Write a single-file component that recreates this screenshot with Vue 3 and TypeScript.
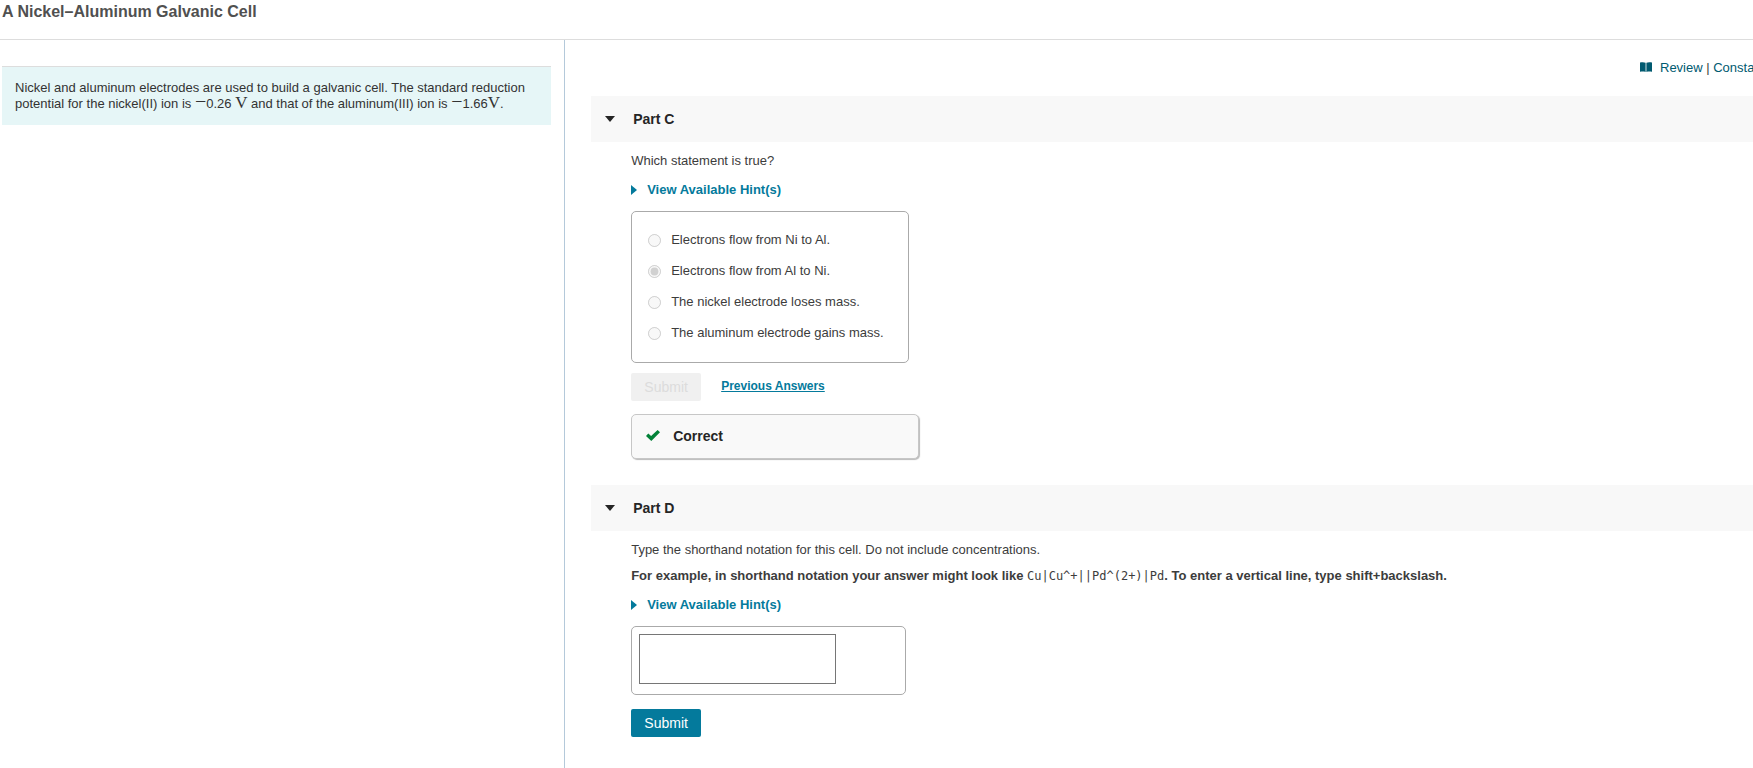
<script setup lang="ts">
import { ref } from 'vue'

const statements: string[] = [
  'Electrons flow from Ni to Al.',
  'Electrons flow from Al to Ni.',
  'The nickel electrode loses mass.',
  'The aluminum electrode gains mass.',
]
const chosen = ref<number>(1)
const notation = ref<string>('')
const openC = ref<boolean>(true)
const openD = ref<boolean>(true)
</script>

<template>
  <div class="page">
    <header class="title-bar">
      <h1>A Nickel–Aluminum Galvanic Cell</h1>
    </header>
    <div class="columns">
      <aside class="intro">
        <p class="problem">
          Nickel and aluminum electrodes are used to build a galvanic cell. The standard reduction potential for the
          nickel(II) ion is <span class="minus">−</span>0.26 <span class="unit">V</span> and that of the aluminum(III)
          ion is <span class="minus">−</span>1.66<span class="unit">V</span>.
        </p>
      </aside>
      <main class="work">
        <nav class="tools">
          <div class="tool-links">
            <svg class="book" viewBox="0 0 12 10" aria-hidden="true">
              <path d="M0 0.5C2 0 4 0 5.6 0.7V10C4 9.4 2 9.4 0 9.8ZM6.4 0.7C8 0 10 0 12 0.5V9.8C10 9.4 8 9.4 6.4 10Z" fill="#005a70" />
            </svg>
            <a href="#review">Review</a> | <a href="#constants">Constants</a>
          </div>
        </nav>

        <section class="part">
          <h2>
            <button type="button" class="part-head" :aria-expanded="openC" @click="openC = !openC">
              <svg class="down" viewBox="0 0 10 6" aria-hidden="true"><path d="M0 0H10L5 6Z" fill="#252525" /></svg>
              Part C
            </button>
          </h2>
          <div v-if="openC" class="part-body">
            <p id="question-c">Which statement is true?</p>
            <button type="button" class="hint">
              <svg class="right" viewBox="0 0 6 10" aria-hidden="true"><path d="M0 0L6 5L0 10Z" fill="#047a9c" /></svg>
              View Available Hint(s)
            </button>
            <div class="choices" role="radiogroup" aria-labelledby="question-c">
              <label v-for="(text, i) in statements" :key="i">
                <input v-model="chosen" type="radio" name="statement" :value="i" disabled />
                <span>{{ text }}</span>
              </label>
            </div>
            <div class="actions">
              <button type="button" class="submit" disabled>Submit</button>
              <a class="previous" href="#previous">Previous Answers</a>
            </div>
            <div class="feedback" role="status">
              <svg class="check" viewBox="0 0 14 11" aria-hidden="true">
                <path d="M0 5.9L2.3 3.5L5.1 6.1L11.6 0L14 2.3L5.3 11Z" fill="#038238" />
              </svg>
              Correct
            </div>
          </div>
        </section>

        <section class="part">
          <h2>
            <button type="button" class="part-head" :aria-expanded="openD" @click="openD = !openD">
              <svg class="down" viewBox="0 0 10 6" aria-hidden="true"><path d="M0 0H10L5 6Z" fill="#252525" /></svg>
              Part D
            </button>
          </h2>
          <div v-if="openD" class="part-body">
            <p id="question-d">Type the shorthand notation for this cell. Do not include concentrations.</p>
            <p class="example">
              For example, in shorthand notation your answer might look like <code>Cu|Cu^+||Pd^(2+)|Pd</code>. To enter
              a vertical line, type shift+backslash.
            </p>
            <button type="button" class="hint">
              <svg class="right" viewBox="0 0 6 10" aria-hidden="true"><path d="M0 0L6 5L0 10Z" fill="#047a9c" /></svg>
              View Available Hint(s)
            </button>
            <div class="answer">
              <input v-model="notation" type="text" aria-labelledby="question-d" />
            </div>
            <button type="button" class="submit">Submit</button>
          </div>
        </section>
      </main>
    </div>
  </div>
</template>

<style>
body {
  margin: 0;
  background: #fff;
}
</style>

<style scoped>
* {
  box-sizing: border-box;
}
.page {
  display: flex;
  flex-direction: column;
  min-height: 100vh;
  overflow: hidden;
  font: 13px/16px "Liberation Sans", Arial, sans-serif;
  color: #3c3c3c;
}
h1,
h2,
p {
  margin: 0;
}
button {
  font: inherit;
  border: 0;
  cursor: pointer;
}
a {
  color: #005a70;
  text-decoration: none;
}
svg {
  flex: none;
  display: block;
}
.title-bar {
  padding: 2px 2px 17px;
  border-bottom: 1px solid #ddd;
}
h1 {
  font-size: 16px;
  line-height: 20px;
  color: #505050;
}
.columns {
  display: flex;
  flex: 1;
}
.intro {
  flex: 0 0 32.24%;
  padding: 26px 13px 0 2px;
  border-right: 1px solid #b4c9da;
}
.problem {
  padding: 13px;
  border-top: 1px solid #ddd;
  background: #e6f6f7;
  color: #333;
}
.minus,
.unit {
  font-family: "Liberation Serif", "Times New Roman", serif;
  line-height: 8px;
}
.minus {
  font-size: 20px;
}
.unit {
  font-size: 17px;
}
.work {
  flex: 1;
  min-width: 0;
  padding: 20px 0 31px 26px;
}
.tools {
  display: flex;
  justify-content: flex-end;
  padding-bottom: 20px;
}
.tool-links {
  width: 113px;
  overflow: hidden;
  white-space: nowrap;
}
.book {
  display: inline-block;
  width: 12px;
  height: 10px;
  margin-right: 4px;
}
.tool-links a:first-of-type {
  margin-left: 4px;
}
.part + .part {
  margin-top: 26px;
}
.part-head {
  display: flex;
  align-items: center;
  gap: 18px;
  width: 100%;
  height: 46px;
  padding: 0 14px;
  background: #f8f8f8;
  color: #252525;
  font-size: 14px;
  font-weight: bold;
}
.down {
  width: 10px;
  height: 6px;
}
.part-body {
  padding: 11px 40px 0;
}
.hint {
  display: flex;
  align-items: center;
  gap: 10px;
  margin: 13px 0;
  padding: 0;
  background: none;
  color: #047a9c;
  font-weight: bold;
}
.right {
  width: 6px;
  height: 10px;
}
.choices {
  display: flex;
  flex-direction: column;
  gap: 15px;
  width: fit-content;
  min-width: 278px;
  padding: 20px 16px 21px;
  border: 1px solid #aaa;
  border-radius: 5px;
}
.choices label {
  display: flex;
  align-items: center;
  gap: 10px;
}
.choices input {
  width: 13px;
  height: 13px;
  margin: 0;
}
.actions {
  display: flex;
  gap: 20px;
  margin: 10px 0 13px;
}
.submit {
  width: 70px;
  height: 28px;
  padding: 0;
  border-radius: 2px;
  background: #047a9c;
  color: #fff;
  font-size: 14px;
}
.submit:disabled {
  background: #f0f0f0;
  color: #dcdcdc;
  cursor: default;
}
.previous {
  padding-top: 5px;
  color: #047a9c;
  font-size: 12px;
  font-weight: bold;
  text-decoration: underline;
}
.feedback {
  display: flex;
  align-items: center;
  gap: 13px;
  width: 288px;
  height: 45px;
  padding: 0 14px 2px;
  border: 1px solid #c7c7c7;
  border-radius: 5px;
  background: #f9f9f9;
  box-shadow: 1px 1px 1px #bbb;
  color: #252525;
  font-size: 14px;
  font-weight: bold;
}
.check {
  width: 14px;
  height: 11px;
}
.example {
  margin-top: 10px;
  font-weight: bold;
}
code {
  font: 12px/12px "DejaVu Sans Mono", monospace;
}
.answer {
  width: 275px;
  margin-bottom: 14px;
  padding: 7px 7px 10px;
  border: 1px solid #aaa;
  border-radius: 5px;
}
.answer input {
  display: block;
  width: 197px;
  height: 50px;
  padding: 4px 8px;
  border: 1px solid #767676;
  font: inherit;
}
</style>
